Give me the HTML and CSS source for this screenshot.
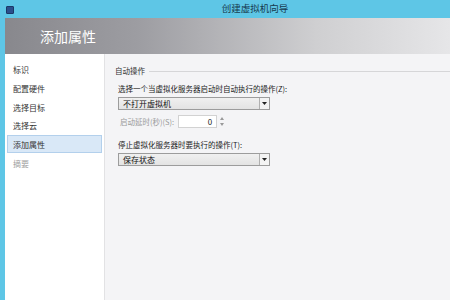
FILE: index.html
```html
<!DOCTYPE html>
<html lang="zh">
<head>
<meta charset="utf-8">
<link rel="stylesheet" href="styles.css">
</head>
<body>
<div class="window">
  <div class="titlebar">
    <span class="app-icon"></span>
    <span class="title">创建虚拟机向导</span>
  </div>
  <div class="frame">
    <div class="header"><span class="heading">添加属性</span></div>
    <div class="main">
      <nav class="nav">
        <div class="nav-item">标识</div>
        <div class="nav-item">配置硬件</div>
        <div class="nav-item">选择目标</div>
        <div class="nav-item">选择云</div>
        <div class="nav-item active">添加属性</div>
        <div class="nav-item disabled">摘要</div>
      </nav>
      <section class="content">
        <div class="group-title"><span>自动操作</span><span class="rule"></span></div>
        <div class="label first">选择一个当虚拟化服务器启动时自动执行的操作(Z):</div>
        <div class="select"><span class="value">不打开虚拟机</span><span class="arrow"><svg width="5" height="3" viewBox="0 0 5 3"><path d="M0 0H5L2.5 3Z" fill="#222"/></svg></span></div>
        <div class="spin-row">
          <span class="label disabled-text">启动延时(秒)(S):</span>
          <span class="spin-box">0</span>
          <span class="spin-arrows"><svg width="4" height="9" viewBox="0 0 4 9"><path d="M0 3L2 0L4 3Z M0 6L2 9L4 6Z" fill="#999"/></svg></span>
        </div>
        <div class="label second">停止虚拟化服务器时要执行的操作(T):</div>
        <div class="select"><span class="value">保存状态</span><span class="arrow"><svg width="5" height="3" viewBox="0 0 5 3"><path d="M0 0H5L2.5 3Z" fill="#222"/></svg></span></div>
      </section>
    </div>
  </div>
</div>
</body>
</html>
```

FILE: styles.css
```css
* { box-sizing: border-box; }
html, body { margin: 0; padding: 0; }
body {
  width: 450px;
  height: 300px;
  overflow: hidden;
  font-family: "Noto Sans CJK SC", "Liberation Sans", sans-serif;
  background: #5ec6e6;
}
.window {
  width: 450px;
  height: 300px;
  display: flex;
  flex-direction: column;
}
.titlebar {
  height: 18px;
  background: #5ec6e6;
  display: flex;
  align-items: center;
  padding-left: 6px;
  flex-shrink: 0;
}
.app-icon {
  width: 8px;
  height: 8px;
  background: #2a4f8c;
  border: 1px solid #1c3766;
  border-radius: 1px;
  margin-top: 1px;
}
.title {
  flex: 1;
  text-align: center;
  padding-left: 46px;
  font-size: 9.5px;
  color: #173a4e;
  line-height: 1;
}
.frame {
  flex: 1;
  margin-left: 5px;
  display: flex;
  flex-direction: column;
  background: #f4f4f6;
}
.header {
  height: 36px;
  flex-shrink: 0;
  background: linear-gradient(to right, #88888d 0%, #9d9da2 30%, #cfcfd1 70%, #e6e6e8 100%);
  display: flex;
  align-items: center;
  padding-left: 35px;
}
.heading {
  color: #ffffff;
  font-size: 14px;
  line-height: 1;
}
.main {
  flex: 1;
  display: flex;
}
.nav {
  width: 100px;
  background: #ffffff;
  border-right: 1px solid #e2e2e4;
  padding: 6px 2px 0 2px;
  display: flex;
  flex-direction: column;
  gap: 1px;
}
.nav-item {
  height: 17.8px;
  font-size: 8px;
  line-height: 17.8px;
  color: #333;
  padding-left: 5px;
  border: 1px solid transparent;
}
.nav-item.active {
  background: #d9e8f7;
  border-color: #b3d0ec;
}
.nav-item.disabled { color: #a0a0a0; }
.content {
  flex: 1;
  padding: 11px 0 0 10px;
  display: flex;
  flex-direction: column;
  align-items: flex-start;
}
.group-title {
  display: flex;
  align-items: center;
  width: 100%;
  font-size: 7.5px;
  color: #333;
  line-height: 12px;
  gap: 4px;
}
.rule {
  flex: 1;
  border-top: 1px solid #d6d6d8;
}
.label {
  font-size: 7.5px;
  color: #222;
  line-height: 12px;
  margin-left: 3px;
}
.label.first { margin-top: 6px; }
.label.second { margin-top: 11px; }
.select {
  margin-left: 3px;
  margin-top: 2px;
  width: 152px;
  height: 13px;
  border: 1px solid #9c9c9c;
  background: linear-gradient(#f0f0f0, #e3e3e3);
  display: flex;
  align-items: stretch;
}
.select .value {
  flex: 1;
  font-size: 8px;
  line-height: 11px;
  padding-left: 4px;
  color: #111;
}
.select .arrow {
  width: 10px;
  border-left: 1px solid #b0b0b0;
  background: #f3f3f3;
  display: flex;
  align-items: center;
  justify-content: center;
}
.spin-row {
  display: flex;
  align-items: center;
  margin-top: 5px;
}
.spin-row .label { margin-left: 5px; }
.disabled-text { color: #9a9a9a; }
.spin-box {
  margin-left: 4px;
  width: 39px;
  height: 13px;
  border: 1px solid #d2d2d2;
  background: #fff;
  font-size: 8px;
  line-height: 11px;
  text-align: right;
  padding-right: 4px;
  color: #222;
}
.spin-arrows {
  margin-left: 3px;
  display: flex;
}
```
